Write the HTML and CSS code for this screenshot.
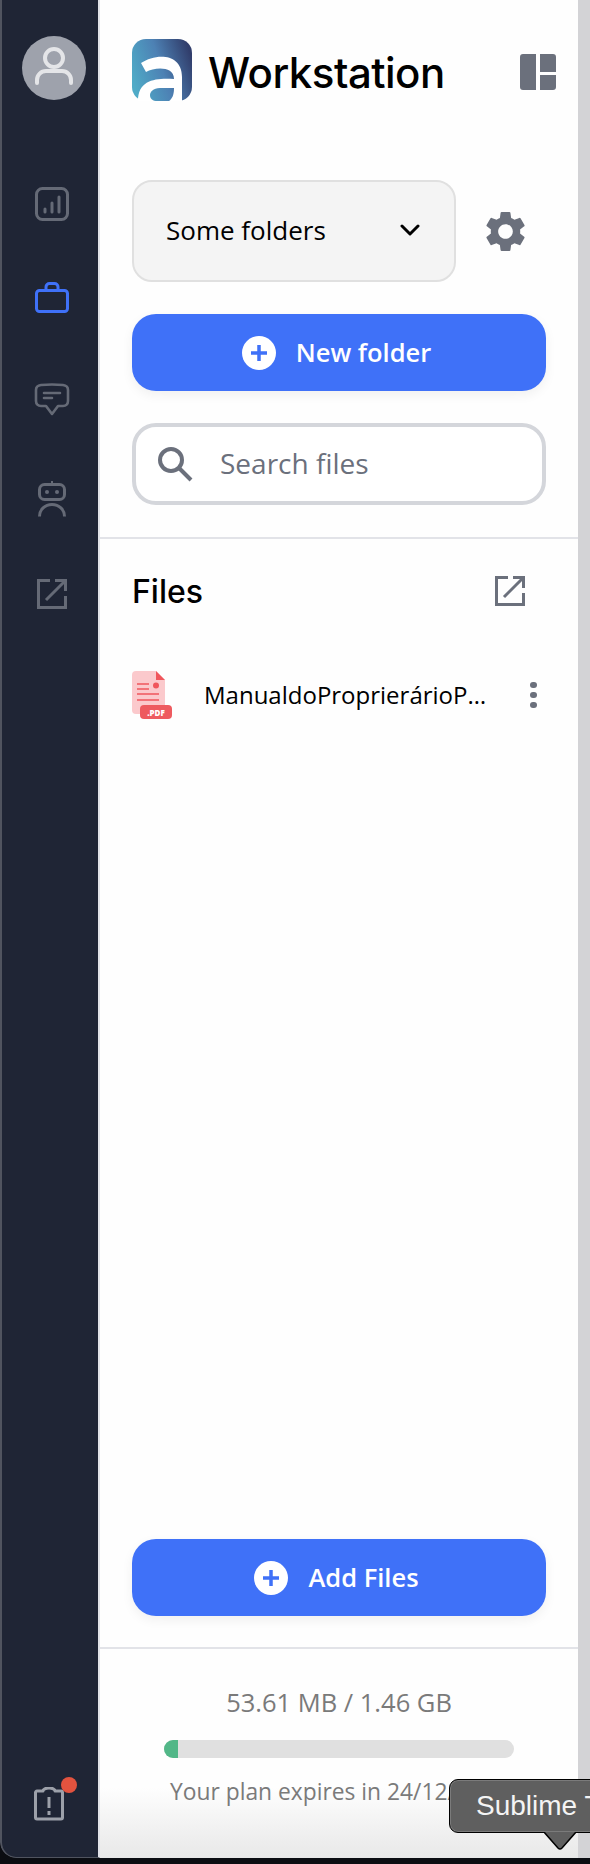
FILE: index.html
```html
<!DOCTYPE html>
<html lang="en">
<head>
<meta charset="utf-8">
<title>Workstation</title>
<link rel="stylesheet" href="styles.css">
</head>
<body>
<div class="window">
  <aside class="rail">
    <div class="avatar">
      <svg width="40" height="44" viewBox="0 0 40 44" fill="none" stroke="#e4e5e8" stroke-width="4" stroke-linecap="round">
        <circle cx="20" cy="12" r="9"/>
        <path d="M3 37v-3a9 9 0 0 1 9-9h16a9 9 0 0 1 9 9v3"/>
      </svg>
    </div>
    <svg class="nav nav-stats" width="34" height="34" viewBox="0 0 34 34" fill="none" stroke="#656a76" stroke-width="3" stroke-linecap="round">
      <rect x="1.5" y="1.5" width="31" height="31" rx="6"/>
      <path d="M10 25v-3M17 25v-9M24 25V10"/>
    </svg>
    <svg class="nav nav-work" width="34" height="31" viewBox="0 0 34 31" fill="none" stroke="#3f71f8" stroke-width="3" stroke-linejoin="round">
      <rect x="1.5" y="8.5" width="31" height="21" rx="3"/>
      <path d="M11 8V5a3.500 3.500 0 0 1 3.500-3.500h5A3.500 3.500 0 0 1 23 5v3"/>
    </svg>
    <svg class="nav nav-chat" width="36" height="33" viewBox="0 0 36 33" fill="none" stroke="#656a76" stroke-width="2.600" stroke-linecap="round" stroke-linejoin="round">
      <path d="M7 2c7-.7 15-.7 22 0 3 .3 5 2.300 5 5v11c0 3-2 5-5 5h-5l-6 8-6-8H7c-3 0-5-2-5-5V7c0-2.700 2-4.700 5-5z"/>
      <path d="M10 10h16M10 15h8"/>
    </svg>
    <svg class="nav nav-bot" width="28" height="36" viewBox="0 0 28 36" fill="none" stroke="#656a76" stroke-width="3">
      <rect x="1.500" y="3.500" width="25" height="15" rx="5"/>
      <path d="M14 0v3" stroke-width="2"/>
      <circle cx="9" cy="11" r="2" fill="#656a76" stroke="none"/>
      <circle cx="19" cy="11" r="2" fill="#656a76" stroke="none"/>
      <path d="M1.500 35.500c0-7 5.500-12 12.500-12s12.500 5 12.500 12"/>
    </svg>
    <svg class="nav nav-open" width="30" height="30" viewBox="0 0 30 30" fill="none" stroke="#656a76" stroke-width="3">
      <path d="M13 1.500H1.500v27h27V17"/>
      <path d="M18 1.500h10.500V12M28 2 9 21" stroke-linecap="butt"/>
    </svg>
    <div class="alert">
      <svg width="30" height="34" viewBox="0 0 30 34" fill="none" stroke="#9ca0a9" stroke-width="3" stroke-linejoin="round">
        <path d="M9 4H3a1.500 1.500 0 0 0-1.500 1.500v25A1.500 1.500 0 0 0 3 32h24a1.500 1.500 0 0 0 1.500-1.500v-25A1.500 1.500 0 0 0 27 4h-6a6 3 0 0 0-12 0z"/>
        <path d="M15 10v11M15 24v4"/>
      </svg>
      <span class="alert-dot"></span>
    </div>
  </aside>

  <main class="panel">
    <header class="head">
      <svg class="logo" width="60" height="62" viewBox="0 0 60 62">
        <defs>
          <linearGradient id="lg" gradientUnits="userSpaceOnUse" x1="0" y1="40" x2="60" y2="20">
            <stop offset="0" stop-color="#4fabc7"/>
            <stop offset="0.5" stop-color="#4d81b4"/>
            <stop offset="1" stop-color="#313e6c"/>
          </linearGradient>
        </defs>
        <rect width="60" height="62" rx="14" fill="url(#lg)"/>
        <path fill="#fff" d="M9 24l5 9c9-5 28-6 28 7-17-1-36 0-36 22h44V38C50 14 24 14 9 24z"/>
        <path fill="url(#lg)" d="M42 49H28c-7 0-10 4-10 7 0 4 3 6 7 6h12c3-2 5-6 5-13z"/>
      </svg>
      <h1 class="title">Workstation</h1>
      <svg class="layout" width="36" height="36" viewBox="0 0 36 36" fill="#6b707c">
        <path d="M3 0h13v36H3a3 3 0 0 1-3-3V3a3 3 0 0 1 3-3zM20 0h13a3 3 0 0 1 3 3v15H20zM20 21h16v12a3 3 0 0 1-3 3H20z"/>
      </svg>
    </header>

    <div class="folder-row">
      <div class="select">
        <span>Some folders</span>
        <svg width="20" height="12" viewBox="0 0 20 12" fill="none" stroke="#000" stroke-width="3" stroke-linecap="round" stroke-linejoin="round"><path d="M2 2l8 8 8-8"/></svg>
      </div>
      <svg class="gear" width="49" height="49" viewBox="0 0 24 24" fill="#6b707c">
        <path d="M19.140 12.940c.04-.3.060-.61.060-.94 0-.32-.020-.64-.070-.94l2.030-1.580a.49.49 0 0 0 .12-.61l-1.920-3.320a.488.488 0 0 0-.59-.22l-2.390.96c-.5-.38-1.030-.7-1.620-.94l-.36-2.540a.484.484 0 0 0-.48-.41h-3.840c-.24 0-.43.170-.47.410l-.36 2.540c-.59.240-1.130.570-1.620.94l-2.390-.96c-.22-.08-.47 0-.59.220L2.740 8.870c-.12.210-.08.470.12.610l2.030 1.580c-.05.300-.09.630-.09.940s.02.640.07.940l-2.030 1.580a.49.49 0 0 0-.12.610l1.920 3.320c.12.220.37.290.59.220l2.390-.96c.5.380 1.030.7 1.620.94l.36 2.540c.05.240.24.410.48.410h3.840c.24 0 .44-.170.47-.410l.36-2.540c.59-.240 1.130-.560 1.620-.94l2.390.96c.22.080.47 0 .59-.220l1.920-3.320c.12-.220.070-.470-.12-.610l-2.010-1.580zM12 15.600c-1.980 0-3.600-1.620-3.600-3.600s1.620-3.600 3.600-3.600 3.600 1.620 3.600 3.600-1.620 3.600-3.600 3.600z"/>
      </svg>
    </div>

    <button class="cta cta-folder" type="button">
      <svg width="34" height="34" viewBox="0 0 34 34"><circle cx="17" cy="17" r="17" fill="#fff"/><path d="M17 9v16M9 17h16" stroke="#3f71f8" stroke-width="3.500"/></svg>
      <span class="cta-label">New folder</span>
    </button>

    <div class="search">
      <svg width="35" height="35" viewBox="0 0 35 35" fill="none" stroke="#6b707c" stroke-width="4"><circle cx="13" cy="13" r="11"/><path d="M21 21l12 12"/></svg>
      <span class="search-text">Search files</span>
    </div>

    <hr class="rule rule-top">

    <div class="files-head">
      <h2 class="files-title">Files</h2>
      <svg width="30" height="30" viewBox="0 0 30 30" fill="none" stroke="#6b707c" stroke-width="3">
        <path d="M13 1.500H1.500v27h27V17"/>
        <path d="M18 1.500h10.500V12M28 2 9 21"/>
      </svg>
    </div>

    <div class="file">
      <svg class="pdf" width="40" height="48" viewBox="0 0 40 48">
        <path fill="#fbc9cc" d="M4 0h20l9 9v34H4a4 4 0 0 1-4-4V4a4 4 0 0 1 4-4z"/>
        <path fill="#f0565c" d="M24 0l9 9h-9z"/>
        <circle cx="24" cy="14.500" r="3" fill="#f0565c"/>
        <path d="M5 13h12M5 18h12M5 23h22M5 29h22" stroke="#f0565c" stroke-width="1.500"/>
        <rect x="8" y="34" width="32" height="14" rx="4" fill="#ee5a5f"/>
        <text class="pdf-label" x="24" y="44.500" text-anchor="middle">.PDF</text>
      </svg>
      <span class="file-name">ManualdoProprierárioPDF.pdf</span>
      <span class="dots"><i></i><i></i><i></i></span>
    </div>

    <div class="spacer"></div>

    <button class="cta cta-add" type="button">
      <svg width="34" height="34" viewBox="0 0 34 34"><circle cx="17" cy="17" r="17" fill="#fff"/><path d="M17 9v16M9 17h16" stroke="#3f71f8" stroke-width="3.500"/></svg>
      <span class="cta-label">Add Files</span>
    </button>

    <hr class="rule rule-bottom">

    <footer class="usage">
      <p class="usage-size">53.61 MB / 1.46 GB</p>
      <div class="bar"><div class="bar-fill"></div></div>
      <p class="usage-plan">Your plan expires in 24/12/2024</p>
    </footer>
  </main>

  <div class="scroll"></div>

  <div class="tip"><span>Sublime Text</span></div>
  <svg class="tip-arrow" width="32" height="18" viewBox="0 0 32 18"><path d="M0 0h32L18 16q-2 2-4 0z" fill="#5f5f5f"/><path d="M0 0l14 16q2 2 4 0L32 0" fill="none" stroke="#000" stroke-width="1.500"/></svg>
</div>
</body>
</html>
```

FILE: styles.css
```css
* { box-sizing: border-box; }
html, body { margin: 0; height: 1864px; background: #0b0d12; overflow: hidden; }
body { font-family: "Open Sans", "Liberation Sans", sans-serif; }

.window {
  position: relative;
  display: flex;
  width: 590px;
  height: 1858px;
  overflow: hidden;
  border-bottom-left-radius: 16px;
}

.rail {
  width: 100px;
  flex: none;
  display: flex;
  flex-direction: column;
  align-items: center;
  padding: 36px 0 0 8px;
  background: #1f2535;
  border-left: 2px solid #50545f;
  border-right: 2px solid #e2e3e8;
  border-bottom: 1px solid #50545f;
  border-bottom-left-radius: 16px;
}
.avatar {
  width: 64px;
  height: 64px;
  border-radius: 50%;
  background: #9ea2ac;
  display: flex;
  align-items: center;
  justify-content: center;
}
.nav { display: block; flex: none; margin-left: -4px; }
.nav-stats { margin-top: 87px; }
.nav-work { margin-top: 61px; }
.nav-chat { margin-top: 70px; }
.nav-bot { margin-top: 65px; }
.nav-open { margin-top: 62px; }
.alert { position: relative; margin-top: auto; margin-bottom: 36px; margin-left: -10px; height: 34px; }
.alert svg { display: block; }
.alert-dot {
  position: absolute;
  top: -10px;
  left: 27px;
  width: 16px;
  height: 16px;
  border-radius: 50%;
  background: #e2533f;
}

.panel {
  width: 478px;
  flex: none;
  display: flex;
  flex-direction: column;
  padding: 0 32px;
  background: linear-gradient(to bottom, #fefefe calc(100% - 70px), #e8e8e8 100%);
}
.head { display: flex; align-items: center; padding-top: 39px; height: 101px; }
.logo { flex: none; }
.title {
  margin: 4px 0 0 16px;
  flex: 1;
  font-family: Inter, sans-serif;
  font-size: 42px;
  font-weight: 500;
  letter-spacing: -0.5px;
  color: #000;
}
.layout { margin-right: -10px; margin-top: 4px; flex: none; }

.folder-row { display: flex; align-items: center; margin-top: 79px; }
.select {
  width: 324px;
  height: 102px;
  padding: 0 34px 2px 32px;
  display: flex;
  align-items: center;
  justify-content: space-between;
  background: #f4f4f4;
  border: 2px solid #e0e0e0;
  border-radius: 20px;
  font-size: 26px;
  color: #000;
}
.gear { margin-left: 25px; flex: none; }

.cta {
  width: 414px;
  height: 77px;
  flex: none;
  display: flex;
  align-items: center;
  justify-content: center;
  gap: 20px;
  padding: 0 5px 0 0;
  border: 0;
  border-radius: 24px;
  background: #3f71f8;
  box-shadow: 0 4px 12px rgba(0, 0, 0, 0.06);
  color: #fff;
  font-family: inherit;
  font-size: 25.500px;
  font-weight: 600;
}
.cta-label { margin-top: -2px; }
.cta-folder { margin-top: 32px; }

.search {
  height: 82px;
  margin-top: 32px;
  display: flex;
  align-items: center;
  gap: 27px;
  padding-left: 22px;
  background: #fff;
  border: 4px solid #d4d6db;
  border-radius: 24px;
  font-size: 28px;
  color: #6b707c;
}
.search-text { margin-top: -2px; }

.rule { height: 2px; margin: 0 -32px; border: 0; background: #e2e3e8; flex: none; }
.rule-top { margin-top: 32px; }
.rule-bottom { margin-top: 31px; }

.files-head { display: flex; align-items: center; justify-content: space-between; padding-right: 21px; margin-top: 32px; height: 40px; }
.files-title { margin: 0; font-family: Inter, sans-serif; font-size: 32px; font-weight: 500; color: #000; }

.file { display: flex; align-items: center; margin-top: 60px; height: 48px; }
.pdf { flex: none; }
.pdf-label { font-family: "Open Sans", sans-serif; font-size: 8px; font-weight: 800; fill: #fff; }
.file-name {
  width: 284px;
  margin-left: 32px;
  margin-top: -2px;
  white-space: nowrap;
  overflow: hidden;
  text-overflow: ellipsis;
  font-size: 24px;
  color: #000;
}
.dots { margin-left: 42px; display: flex; flex-direction: column; gap: 3.500px; }
.dots i { display: block; width: 6.500px; height: 6.500px; border-radius: 50%; background: #6b707c; }

.spacer { flex: 1; }

.usage { text-align: center; color: #7a7a7a; padding-bottom: 51px; }
.usage-size { margin: 36px 0 0; font-size: 25.500px; line-height: 34px; }
.bar { width: 350px; height: 18px; margin: 21px 0 0 32px; border-radius: 9px; background: #e0e0e0; overflow: hidden; }
.bar-fill { width: 14px; height: 100%; background: #52b788; }
.usage-plan { margin: 19px 0 0; font-size: 22.800px; line-height: 30px; white-space: nowrap; }

.scroll { flex: 1; background: #d3d3d6; }

.tip {
  position: absolute;
  left: 449px;
  top: 1779px;
  width: 180px;
  height: 54px;
  display: flex;
  align-items: center;
  padding-left: 26px;
  background: #5f5f5f;
  border: 1.500px solid #000;
  border-radius: 9px;
  box-shadow: inset 0 0 0 1px #7b7b7b;
  font-family: "Liberation Sans", sans-serif;
  font-size: 28px;
  color: #f4f4f4;
  white-space: nowrap;
}
.tip-arrow { position: absolute; left: 544px; top: 1832px; }
```
